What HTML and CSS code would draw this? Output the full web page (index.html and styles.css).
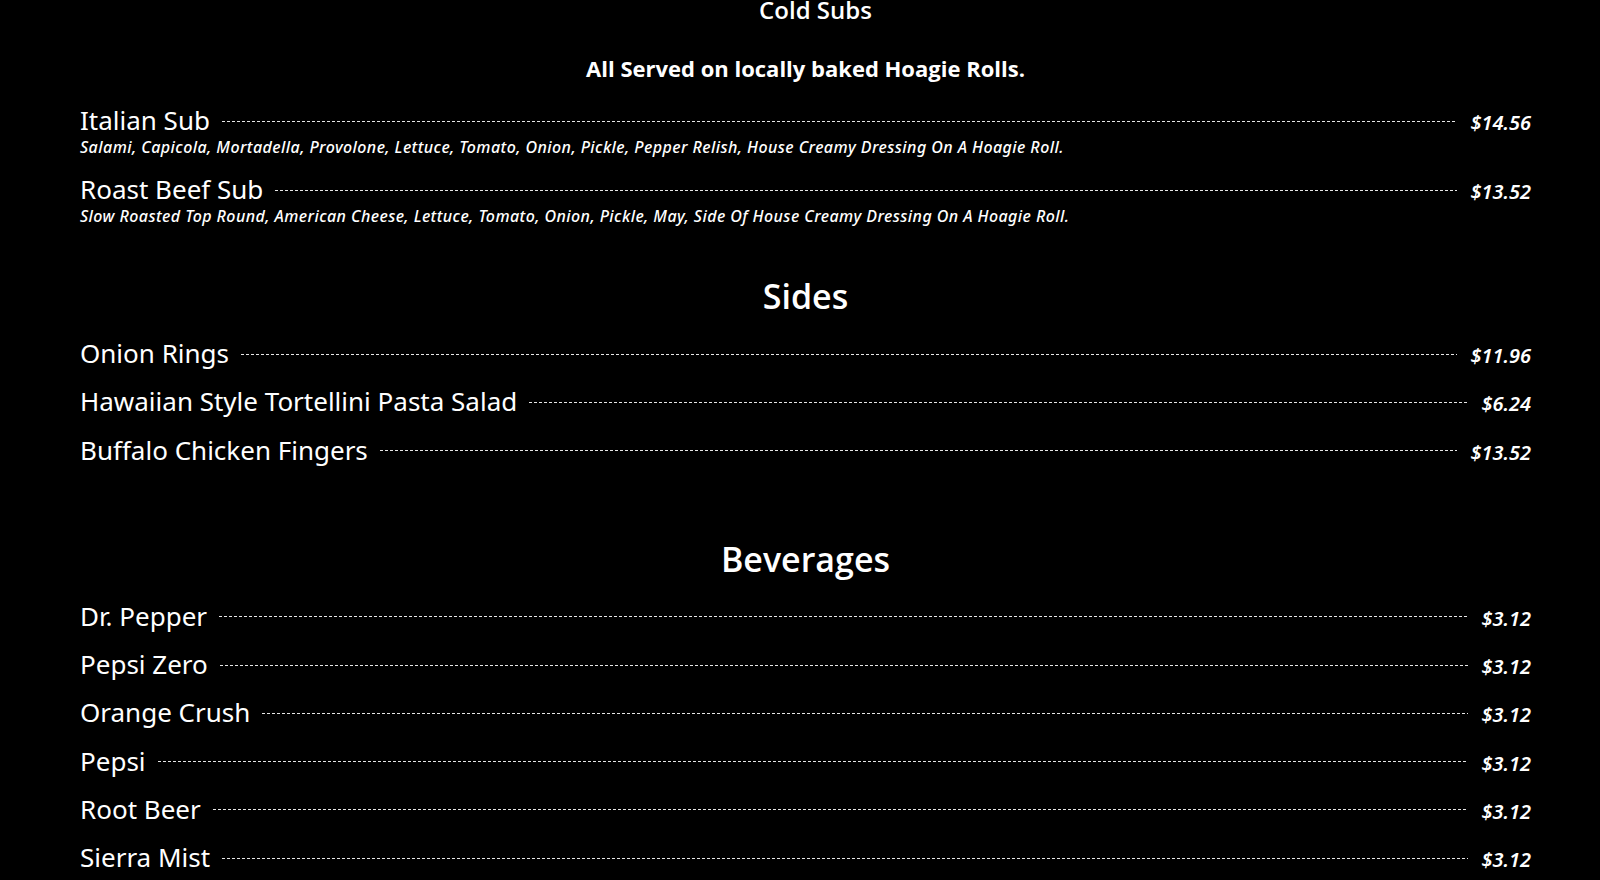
FILE: index.html
```html
<!DOCTYPE html>
<html lang="en">
<head>
<meta charset="utf-8">
<title>Menu</title>
<link rel="stylesheet" href="styles.css">
</head>
<body>
<main class="menu">
  <section class="category category--first">
    <h2 class="category-title category-title--sub">Cold Subs</h2>
    <p class="category-note">All Served on locally baked Hoagie Rolls.</p>
    <ul class="items">
      <li class="item">
        <div class="item-row"><span class="item-name">Italian Sub</span><span class="item-dots"></span><span class="item-price">$14.56</span></div>
        <p class="item-desc">Salami, Capicola, Mortadella, Provolone, Lettuce, Tomato, Onion, Pickle, Pepper Relish, House Creamy Dressing On A Hoagie Roll.</p>
      </li>
      <li class="item">
        <div class="item-row"><span class="item-name">Roast Beef Sub</span><span class="item-dots"></span><span class="item-price">$13.52</span></div>
        <p class="item-desc">Slow Roasted Top Round, American Cheese, Lettuce, Tomato, Onion, Pickle, May, Side Of House Creamy Dressing On A Hoagie Roll.</p>
      </li>
    </ul>
  </section>

  <section class="category category--sides">
    <h2 class="category-title">Sides</h2>
    <ul class="items">
      <li class="item"><div class="item-row"><span class="item-name">Onion Rings</span><span class="item-dots"></span><span class="item-price">$11.96</span></div></li>
      <li class="item"><div class="item-row"><span class="item-name">Hawaiian Style Tortellini Pasta Salad</span><span class="item-dots"></span><span class="item-price">$6.24</span></div></li>
      <li class="item"><div class="item-row"><span class="item-name">Buffalo Chicken Fingers</span><span class="item-dots"></span><span class="item-price">$13.52</span></div></li>
    </ul>
  </section>

  <section class="category category--beverages">
    <h2 class="category-title">Beverages</h2>
    <ul class="items">
      <li class="item"><div class="item-row"><span class="item-name">Dr. Pepper</span><span class="item-dots"></span><span class="item-price">$3.12</span></div></li>
      <li class="item"><div class="item-row"><span class="item-name">Pepsi Zero</span><span class="item-dots"></span><span class="item-price">$3.12</span></div></li>
      <li class="item"><div class="item-row"><span class="item-name">Orange Crush</span><span class="item-dots"></span><span class="item-price">$3.12</span></div></li>
      <li class="item"><div class="item-row"><span class="item-name">Pepsi</span><span class="item-dots"></span><span class="item-price">$3.12</span></div></li>
      <li class="item"><div class="item-row"><span class="item-name">Root Beer</span><span class="item-dots"></span><span class="item-price">$3.12</span></div></li>
      <li class="item"><div class="item-row"><span class="item-name">Sierra Mist</span><span class="item-dots"></span><span class="item-price">$3.12</span></div></li>
    </ul>
  </section>
</main>
</body>
</html>
```

FILE: styles.css
```css
html, body {
  margin: 0;
  padding: 0;
  background: #000;
  color: #fff;
  height: 880px;
  overflow: hidden;
}

.menu {
  padding: 0 69px 0 80px;
  display: flex;
  flex-direction: column;
}

.category {
  display: flex;
  flex-direction: column;
}

.category--sides {
  margin-top: 51.5px;
}

.category--beverages {
  margin-top: 74px;
}

.category-title {
  margin: 0;
  text-align: center;
  font-family: "Open Sans", "Noto Sans", sans-serif;
  font-weight: 600;
  font-size: 34px;
  line-height: 40px;
}

.category-title--sub {
  font-size: 24px;
  line-height: 20px;
  padding-left: 20px;
}

.category-note {
  margin: 34.5px 0 0;
  text-align: center;
  font-family: "Open Sans", "Noto Sans", sans-serif;
  font-weight: 700;
  font-size: 22px;
  line-height: 26px;
}

.items {
  list-style: none;
  margin: 22px 0 0;
  padding: 0;
  display: flex;
  flex-direction: column;
  gap: 18.3px;
}

.category--first .items {
  margin-top: 24.9px;
}

.item-row {
  display: flex;
  align-items: baseline;
  height: 30px;
  line-height: 30px;
}

.item-name {
  font-family: "Noto Sans", sans-serif;
  font-size: 26px;
  font-weight: 400;
  white-space: nowrap;
}

.item-dots {
  flex: 1;
  align-self: center;
  height: 1px;
  margin: 2px 13px 0 12px;
  background: repeating-linear-gradient(to right, rgba(255,255,255,0.9) 0 3px, transparent 3px 5px);
}

.item-price {
  font-family: "Noto Sans", sans-serif;
  font-style: italic;
  font-weight: 600;
  font-size: 20px;
  white-space: nowrap;
}

.item-desc {
  margin: 0;
  padding-top: 2.5px;
  font-family: "Noto Sans", sans-serif;
  font-style: italic;
  font-weight: 500;
  font-size: 16px;
  letter-spacing: 0.43px;
  line-height: 18px;
}
```
